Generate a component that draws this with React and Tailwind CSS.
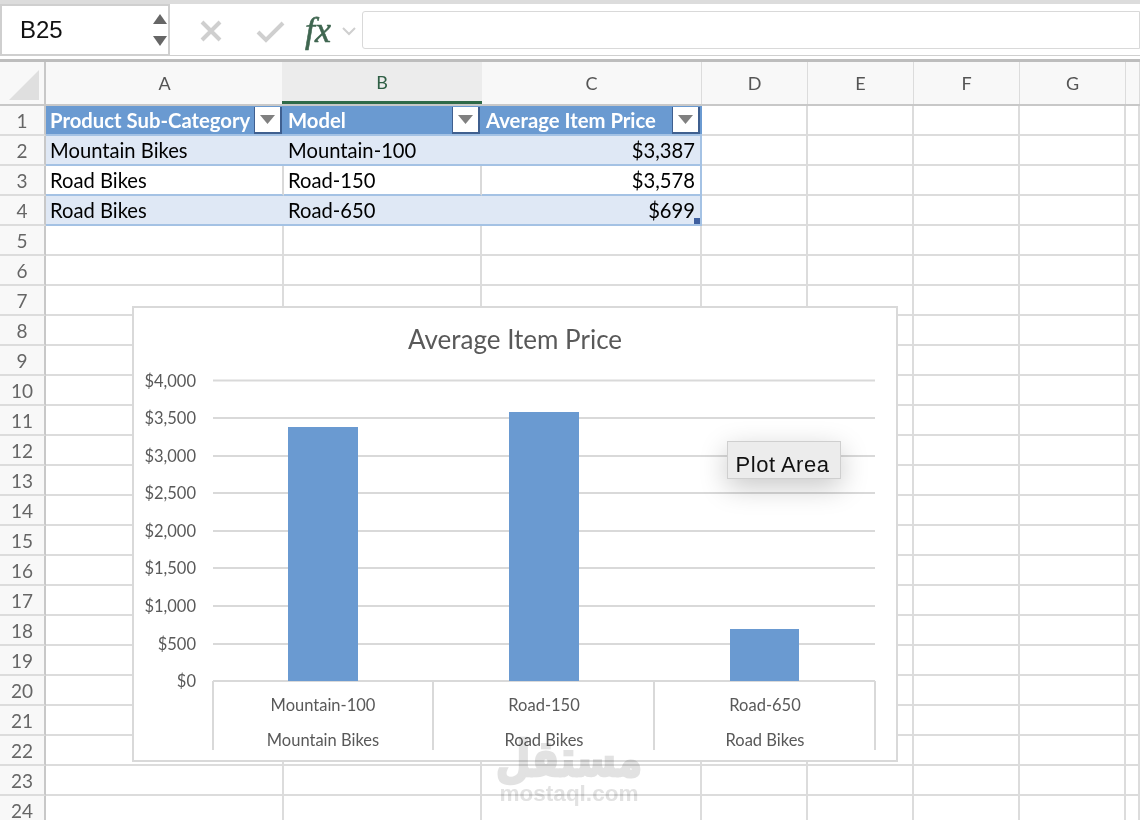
import React from "react";

const columns = ["A", "B", "C", "D", "E", "F", "G", ""];
const rowNumbers = Array.from({ length: 24 }, (_, i) => i + 1);
const tableRows = {
  2: ["Mountain Bikes", "Mountain-100", "$3,387"],
  3: ["Road Bikes", "Road-150", "$3,578"],
  4: ["Road Bikes", "Road-650", "$699"],
};
const yTicks = [
  ["$4,000", 380.5],
  ["$3,500", 418],
  ["$3,000", 456],
  ["$2,500", 493],
  ["$2,000", 531],
  ["$1,500", 568],
  ["$1,000", 606],
  ["$500", 644],
  ["$0", 681],
];
const bars = [
  { x: 288, w: 70, top: 427 },
  { x: 509, w: 70, top: 412 },
  { x: 730, w: 69, top: 629 },
];
const categories = [
  { x: 323, model: "Mountain-100", group: "Mountain Bikes" },
  { x: 544, model: "Road-150", group: "Road Bikes" },
  { x: 765, model: "Road-650", group: "Road Bikes" },
];

const gridCols = "grid grid-cols-[46px_238px_198px_220px_106px_106px_106px_106px_14px]";

function FilterButton() {
  return (
    <div className="absolute top-[1px] right-[2px] flex h-[27px] w-[28px] items-center justify-center border-r-2 border-b-2 border-l border-[#3f5f8f] bg-white">
      <svg width="15" height="9" viewBox="0 0 15 9">
        <path d="M0 0H15L7.5 9Z" fill="#808080" />
      </svg>
    </div>
  );
}

function NameBox() {
  return (
    <div className="flex h-[52px] w-[170px] items-center justify-between border-2 border-[#cfcfcf] bg-white pr-[1px] pl-[18px]">
      <span className="font-['Liberation_Sans',sans-serif] text-[24px] text-[#111]">B25</span>
      <div className="flex flex-col gap-[12px]">
        <svg width="14" height="10" viewBox="0 0 14 10">
          <path d="M7 0L14 10H0Z" fill="#666" />
        </svg>
        <svg width="14" height="10" viewBox="0 0 14 10">
          <path d="M0 0H14L7 10Z" fill="#666" />
        </svg>
      </div>
    </div>
  );
}

function FormulaBar() {
  return (
    <div className="h-[62px] border-b-[3px] border-[#bdbdbd] bg-white">
      <div className="h-[4px] bg-[#dcdcdc]" />
      <div className="flex h-[52px] items-center border-b border-[#cfcfcf]">
        <NameBox />
        <div className="flex flex-1 items-center pl-[29px]">
          <svg className="mt-[3px]" width="24" height="24" viewBox="0 0 24 24" fill="none" stroke="#cfcfcf" strokeWidth="4">
            <path d="M3 3L21 21M21 3L3 21" />
          </svg>
          <svg className="mt-[3px] ml-[33px]" width="30" height="24" viewBox="0 0 30 24" fill="none" stroke="#cfcfcf" strokeWidth="4">
            <path d="M2 13L10 21L27 4" />
          </svg>
          <span className="ml-[19px] w-[31px] font-['Liberation_Serif',serif] text-[36px] leading-none text-[#3f6650] italic [-webkit-text-stroke:0.6px_#3f6650]">
            fx
          </span>
          <svg className="mt-[3px] ml-[6px]" width="14" height="9" viewBox="0 0 14 9" fill="none" stroke="#cfcfcf" strokeWidth="2">
            <path d="M1 1L7 7L13 1" />
          </svg>
          <div className="ml-[6px] h-[38px] flex-1 rounded-l-[3px] border border-[#d9d9d9] bg-white" />
        </div>
      </div>
    </div>
  );
}

function ColumnHeaders() {
  return (
    <div className={`${gridCols} h-[44px] border-b-2 border-[#c8c8c8] bg-[#f8f8f8]`}>
      <div className="flex items-end justify-end border-r-2 border-[#c8c8c8] pr-[5px] pb-[4px]">
        <svg width="30" height="30" viewBox="0 0 30 30">
          <path d="M30 0V30H0Z" fill="#dfdfdf" />
        </svg>
      </div>
      {columns.map((col, i) => (
        <div
          key={i}
          className={
            col === "B"
              ? "-ml-[2px] flex items-center justify-center border-b-[3px] border-[#2f6a48] bg-[#ececec] pt-[1px] text-[18px] text-[#2f5f45]"
              : "flex items-center justify-center border-r border-[#dcdcdc] pt-[1px] text-[18px] text-[#555]"
          }
        >
          {col}
        </div>
      ))}
    </div>
  );
}

function GridRow({ n }) {
  const data = tableRows[n];
  const blank = columns.slice(data || n === 1 ? 3 : 0);

  return (
    <div className={`${gridCols} h-[30px]`}>
      <div className="flex items-center justify-center border-r-2 border-b-2 border-r-[#c8c8c8] border-b-[#dcdcdc] bg-[#f8f8f8] text-[19px] leading-none text-[#666]">
        {n}
      </div>

      {n === 1 &&
        ["Product Sub-Category", "Model", "Average Item Price"].map((label) => (
          <div
            key={label}
            className="relative flex items-center overflow-hidden border-b-2 border-[#a4c2e4] bg-[#6a9ad1] pl-[4px] text-[20.3px] leading-none font-bold whitespace-nowrap text-white"
          >
            {label}
            <FilterButton />
          </div>
        ))}

      {data &&
        data.map((text, i) => (
          <div
            key={i}
            className={[
              "flex items-center border-b-2 border-[#a4c2e4] text-[20.2px] leading-none text-black",
              i === 2 ? "justify-end border-r-2 pr-[5px]" : "pl-[4px]",
              n % 2 === 0 ? "bg-[#dfe8f5]" : "bg-white",
              n === 3 && i < 2 ? "border-r-2 border-r-[#d9d9d9]" : "",
              i === 2 && n === 4 ? "relative" : "",
            ].join(" ")}
          >
            {text}
            {i === 2 && n === 4 && <div className="absolute right-0 bottom-0 h-[6px] w-[6px] bg-[#3f5f9f]" />}
          </div>
        ))}

      {blank.map((_, i) => (
        <div key={i} className="border-r-2 border-b-2 border-[#dcdcdc] bg-white" />
      ))}
    </div>
  );
}

function Chart() {
  return (
    <div className="absolute top-[306px] left-[132px] h-[456px] w-[766px] border-2 border-[#d9d9d9] bg-white">
      <div className="flex h-[57px] items-center justify-center pt-[4px] text-[26px] leading-none text-[#595959]">
        Average Item Price
      </div>
      <svg width="762" height="395" viewBox="134 365 762 395" className="block">
        {yTicks.map(([label, y]) => (
          <g key={label}>
            <line x1="213" x2="875" y1={y} y2={y} stroke="#d9d9d9" strokeWidth="2" />
            <text x="196" y={y + 6} textAnchor="end" fontSize="16.5" fill="#595959">
              {label}
            </text>
          </g>
        ))}
        {bars.map((b) => (
          <rect key={b.x} x={b.x} y={b.top} width={b.w} height={681 - b.top} fill="#6a9ad1" />
        ))}
        {[213, 433, 654, 875].map((x) => (
          <line key={x} x1={x} x2={x} y1="681" y2="750" stroke="#d9d9d9" strokeWidth="2" />
        ))}
        {categories.map((c) => (
          <g key={c.x} fontSize="16.5" fill="#595959" textAnchor="middle">
            <text x={c.x} y="711">{c.model}</text>
            <text x={c.x} y="746">{c.group}</text>
          </g>
        ))}
      </svg>
      <div className="absolute top-[133px] left-[593px] flex h-[38px] w-[114px] items-center justify-center border border-[#cfcfcf] bg-[#ececec] pt-[9px] pr-[3px] font-['Liberation_Sans',sans-serif] text-[22px] leading-none tracking-[0.5px] text-[#111] shadow-[0_8px_28px_rgba(0,0,0,0.22)]">
        Plot Area
      </div>
    </div>
  );
}

function Watermark() {
  return (
    <div className="pointer-events-none absolute top-[733px] left-[498px] flex w-[142px] flex-col items-center text-[#e2e2e2] mix-blend-multiply">
      <span
        dir="rtl"
        className="scale-y-125 font-['DejaVu_Sans',sans-serif] text-[40px] leading-[50px] font-bold [-webkit-text-stroke:2px_#e2e2e2]"
      >
        مستقل
      </span>
      <span className="font-['Liberation_Sans',sans-serif] text-[22.5px] leading-[22px] font-bold">mostaql.com</span>
    </div>
  );
}

export default function App() {
  return (
    <div className="relative h-[820px] w-[1140px] overflow-hidden bg-white font-['Lato',sans-serif]">
      <FormulaBar />
      <ColumnHeaders />
      {rowNumbers.map((n) => (
        <GridRow key={n} n={n} />
      ))}
      <Chart />
      <Watermark />
    </div>
  );
}
